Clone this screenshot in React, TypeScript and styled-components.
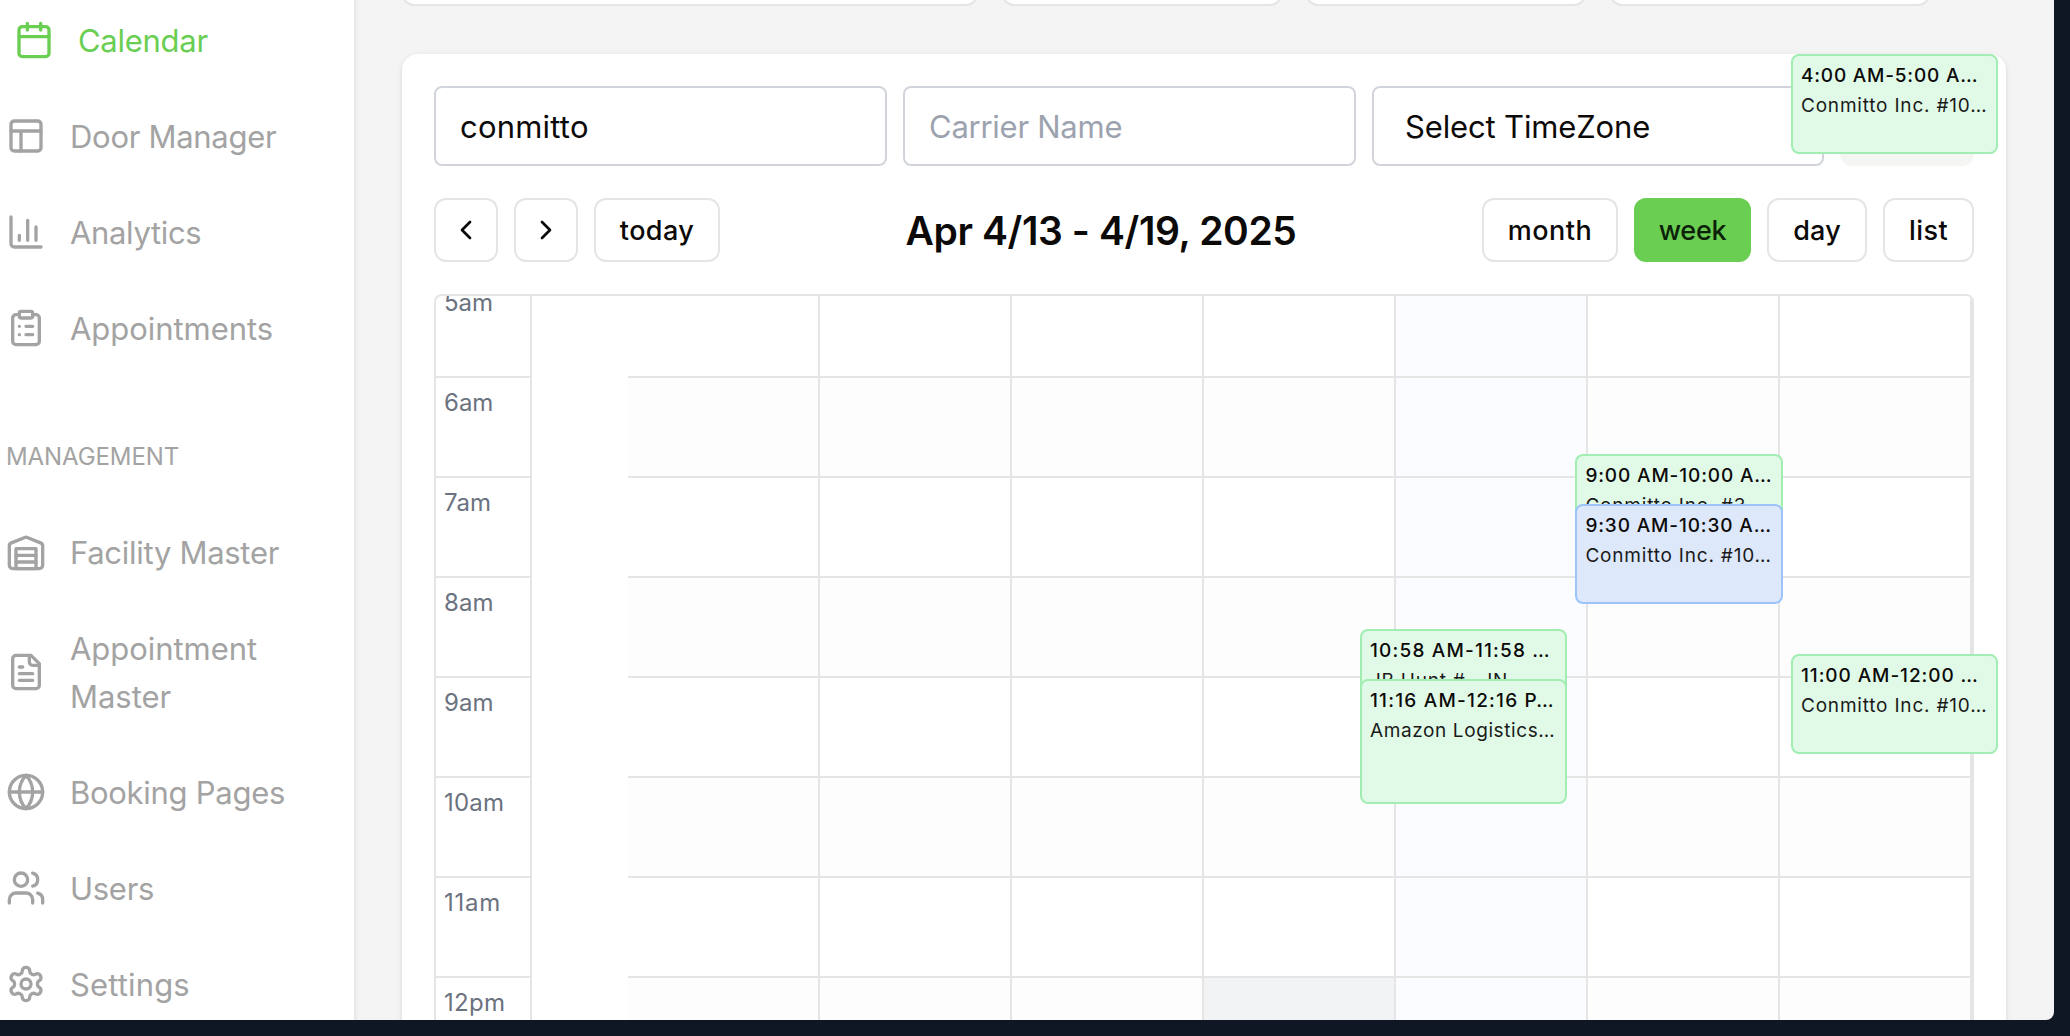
import React from 'react';
import styled, { createGlobalStyle, css } from 'styled-components';

const color = {
  frame: '#0f1624',
  page: '#f4f4f4',
  surface: '#ffffff',
  line: '#e5e5e5',
  field: '#d1d5db',
  text: '#0c0a09',
  nav: '#a3a3a3',
  green: '#69ce52',
  slate: '#6b7280',
};

const GlobalStyle = createGlobalStyle`
  *, *::before, *::after { box-sizing: border-box; }
  body {
    margin: 0;
    background: ${color.frame};
    color: ${color.text};
    font-family: Inter, "Liberation Sans", sans-serif;
    overflow: hidden;
  }
  button, input { font: inherit; color: inherit; }
`;

/* ---------- shell ---------- */

const Frame = styled.div`
  width: 2070px;
  height: 1036px;
  padding: 0 16px 16px 0;
  background: ${color.frame};
`;

const Window = styled.div`
  display: flex;
  width: 2054px;
  height: 1020px;
  overflow: hidden;
  background: ${color.page};
  border-bottom-right-radius: 8px;
`;

const softShadow = css`
  box-shadow: 0 2px 6px rgba(0, 0, 0, 0.1), 0 2px 4px -2px rgba(0, 0, 0, 0.1);
`;

/* ---------- sidebar ---------- */

const Sidebar = styled.nav`
  flex: 0 0 354px;
  margin-top: -8px;
  padding-left: 6px;
  background: ${color.surface};
  ${softShadow}
`;

const NavItem = styled.a<{ $active?: boolean }>`
  display: flex;
  align-items: center;
  gap: 24px;
  padding: 24px 40px 24px ${p => (p.$active ? 8 : 0)}px;
  color: ${p => (p.$active ? color.green : color.nav)};
`;

const NavIcon = styled.svg`
  flex: none;
  width: 40px;
  height: 40px;
  fill: none;
  stroke: currentColor;
  stroke-width: 2;
  stroke-linecap: round;
  stroke-linejoin: round;
`;

const NavLabel = styled.span<{ $track: number }>`
  margin: 1px 0 -1px;
  font-size: 31px;
  line-height: 48px;
  letter-spacing: ${p => p.$track}px;
`;

const NavHeading = styled.div`
  height: 128px;
  line-height: 32px;
  padding: 65px 0 31px;
  font-size: 24px;
  letter-spacing: -0.09px;
  color: ${color.nav};
`;

/* ---------- content ---------- */

const Content = styled.main`
  flex: 1;
  min-width: 0;
  padding: 0 48px;
`;

const SummaryRow = styled.div`
  display: flex;
  gap: 24px;
  height: 54px;
`;

const SummaryCard = styled.div<{ $width: number }>`
  width: ${p => p.$width}px;
  height: 46px;
  margin-top: -40px;
  background: ${color.surface};
  border: 2px solid ${color.line};
  border-radius: 12px;
`;

const Card = styled.section`
  position: relative;
  width: 1604px;
  height: 1200px;
  padding: 32px;
  background: ${color.surface};
  border-radius: 16px;
  ${softShadow}
`;

const Filters = styled.div`
  display: grid;
  grid-template-columns: 453px 453px 452px 134px;
  gap: 16px;
  height: 80px;
`;

const fieldBox = css`
  min-width: 0;
  width: 100%;
  height: 80px;
  border: 2px solid ${color.field};
  border-radius: 8px;
  background: ${color.surface};
  font-size: 31px;
`;

const Field = styled.input<{ $track: number }>`
  ${fieldBox}
  padding: 0 24px;
  outline: none;
  letter-spacing: ${p => p.$track}px;
  &::placeholder { color: #9ca3af; opacity: 1; }
`;

const ZoneSelect = styled.div`
  ${fieldBox}
  display: flex;
  align-items: center;
  padding: 0 31px;
  letter-spacing: -0.15px;
`;

const ClearButton = styled.button`
  border: 0;
  border-radius: 12px;
  background: #f5f5f4;
`;

const Toolbar = styled.div`
  display: flex;
  align-items: center;
  justify-content: space-between;
  height: 64px;
  margin: 32px 0;
`;

const ButtonGroup = styled.div`
  display: flex;
  gap: 16px;
`;

const ToolButton = styled.button<{ $width: number; $active?: boolean; $track?: number }>`
  display: flex;
  align-items: center;
  justify-content: center;
  width: ${p => p.$width}px;
  height: 64px;
  padding: 0;
  border: 2px solid ${p => (p.$active ? color.green : color.line)};
  border-radius: 12px;
  background: ${p => (p.$active ? color.green : color.surface)};
  color: ${p => (p.$active ? '#0c2108' : color.text)};
  font-size: 27px;
  font-weight: 500;
  letter-spacing: ${p => p.$track ?? 0}px;
`;

const Chevron = styled.svg`
  width: 32px;
  height: 32px;
  fill: none;
  stroke: currentColor;
  stroke-width: 2;
  stroke-linecap: round;
  stroke-linejoin: round;
`;

const Title = styled.h2`
  margin: 0;
  padding-top: 1px;
  font-size: 39px;
  font-weight: 600;
  line-height: 48px;
  letter-spacing: -0.4px;
  white-space: nowrap;
`;

/* ---------- time grid ---------- */

const GridFrame = styled.div`
  height: 1000px;
  overflow: hidden;
  border: 2px solid ${color.line};
  border-radius: 8px;
`;

const Hours = styled.div`
  margin-top: -18px;
`;

const HourRow = styled.div`
  display: grid;
  grid-template-columns: 96px 96px repeat(7, 192px);
  height: 100px;
`;

const HourLabel = styled.div<{ $track: number }>`
  grid-column: 1;
  padding: 9px 8px 0;
  border-right: 2px solid ${color.line};
  border-bottom: 2px solid ${color.line};
  font-size: 24px;
  line-height: 32px;
  letter-spacing: ${p => p.$track}px;
  color: ${color.slate};
`;

const cellTone = {
  plain: '#ffffff',
  striped: '#fdfdfd',
  today: '#fbfcff',
  marked: '#f2f3f5',
};

const Cell = styled.div<{ $tone: keyof typeof cellTone }>`
  background: ${p => cellTone[p.$tone]};
  border-right: 2px solid ${color.line};
  border-bottom: 2px solid ${color.line};
  &:nth-child(2) { grid-column: 3; }
`;

const Appointment = styled.article<{ $x: number; $y: number; $h: number; $blue?: boolean }>`
  position: absolute;
  left: ${p => p.$x}px;
  top: ${p => p.$y}px;
  width: 207.3px;
  height: ${p => p.$h}px;
  padding: 5px 0 0 8px;
  overflow: hidden;
  border: 2px solid ${p => (p.$blue ? '#9cc3fa' : '#a1edb2')};
  border-radius: 8px;
  background: ${p => (p.$blue ? '#dde8fb' : '#e1fae8')};
  font-size: 19px;
  line-height: 30px;
  white-space: nowrap;
`;

const AppointmentTime = styled.div<{ $track: number }>`
  font-weight: 500;
  letter-spacing: ${p => p.$track}px;
`;

const AppointmentName = styled.div<{ $track: number }>`
  letter-spacing: ${p => p.$track}px;
  color: #1a1a19;
`;

/* ---------- icons ---------- */

const icons: Record<string, React.ReactNode> = {
  calendar: (
    <>
      <path d="M8 2v4M16 2v4M3 10h18" />
      <rect x="3" y="4" width="18" height="18" rx="2" />
    </>
  ),
  layout: (
    <>
      <rect x="3" y="3" width="18" height="18" rx="2" />
      <path d="M3 9h18M9 21V9" />
    </>
  ),
  chart: <path d="M3 3v16a2 2 0 0 0 2 2h16M18 17V9M13 17V5M8 17v-3" />,
  clipboard: (
    <>
      <rect x="8" y="2" width="8" height="4" rx="1" />
      <path d="M16 4h2a2 2 0 0 1 2 2v14a2 2 0 0 1-2 2H6a2 2 0 0 1-2-2V6a2 2 0 0 1 2-2h2" />
      <path d="M12 11h4M12 16h4M8 11h.01M8 16h.01" />
    </>
  ),
  warehouse: (
    <>
      <path d="M22 8.35V20a2 2 0 0 1-2 2H4a2 2 0 0 1-2-2V8.35A2 2 0 0 1 3.26 6.5l8-3.2a2 2 0 0 1 1.48 0l8 3.2A2 2 0 0 1 22 8.35Z" />
      <path d="M6 18h12M6 14h12" />
      <rect x="6" y="10" width="12" height="12" />
    </>
  ),
  file: (
    <>
      <path d="M15 2H6a2 2 0 0 0-2 2v16a2 2 0 0 0 2 2h12a2 2 0 0 0 2-2V7Z" />
      <path d="M14 2v4a2 2 0 0 0 2 2h4M10 9H8M16 13H8M16 17H8" />
    </>
  ),
  globe: (
    <>
      <circle cx="12" cy="12" r="10" />
      <path d="M12 2a14.5 14.5 0 0 0 0 20 14.5 14.5 0 0 0 0-20M2 12h20" />
    </>
  ),
  users: (
    <>
      <path d="M16 21v-2a4 4 0 0 0-4-4H6a4 4 0 0 0-4 4v2" />
      <circle cx="9" cy="7" r="4" />
      <path d="M22 21v-2a4 4 0 0 0-3-3.87M16 3.13a4 4 0 0 1 0 7.75" />
    </>
  ),
  settings: (
    <>
      <path d="M12.22 2h-.44a2 2 0 0 0-2 2v.18a2 2 0 0 1-1 1.73l-.43.25a2 2 0 0 1-2 0l-.15-.08a2 2 0 0 0-2.73.73l-.22.38a2 2 0 0 0 .73 2.73l.15.1a2 2 0 0 1 1 1.72v.51a2 2 0 0 1-1 1.74l-.15.09a2 2 0 0 0-.73 2.73l.22.38a2 2 0 0 0 2.73.73l.15-.08a2 2 0 0 1 2 0l.43.25a2 2 0 0 1 1 1.73V20a2 2 0 0 0 2 2h.44a2 2 0 0 0 2-2v-.18a2 2 0 0 1 1-1.73l.43-.25a2 2 0 0 1 2 0l.15.08a2 2 0 0 0 2.73-.73l.22-.39a2 2 0 0 0-.73-2.73l-.15-.08a2 2 0 0 1-1-1.74v-.5a2 2 0 0 1 1-1.74l.15-.09a2 2 0 0 0 .73-2.73l-.22-.38a2 2 0 0 0-2.73-.73l-.15.08a2 2 0 0 1-2 0l-.43-.25a2 2 0 0 1-1-1.73V4a2 2 0 0 0-2-2z" />
      <circle cx="12" cy="12" r="3" />
    </>
  ),
};

/* ---------- data ---------- */

type NavEntry = { label: string; icon: string; track: number; active?: boolean };

const primaryNav: NavEntry[] = [
  { label: 'Calendar', icon: 'calendar', track: -0.28, active: true },
  { label: 'Door Manager', icon: 'layout', track: -0.29 },
  { label: 'Analytics', icon: 'chart', track: -0.33 },
  { label: 'Appointments', icon: 'clipboard', track: -0.04 },
];

const managementNav: NavEntry[] = [
  { label: 'Facility Master', icon: 'warehouse', track: -0.29 },
  { label: 'Appointment Master', icon: 'file', track: -0.04 },
  { label: 'Booking Pages', icon: 'globe', track: -0.28 },
  { label: 'Users', icon: 'users', track: -0.29 },
  { label: 'Settings', icon: 'settings', track: 0.15 },
];

const hours = [
  { label: '5am', track: 0 },
  { label: '6am', track: 0 },
  { label: '7am', track: 0 },
  { label: '8am', track: 0.1 },
  { label: '9am', track: 0.1 },
  { label: '10am', track: 0.2 },
  { label: '11am', track: 0.75 },
  { label: '12pm', track: 0.3 },
  { label: '1pm', track: 0 },
];
const days = [0, 1, 2, 3, 4, 5, 6];
const todayIndex = 4;

const toneOf = (row: number, day: number): keyof typeof cellTone => {
  if (day === todayIndex) return 'today';
  if (day === 3 && row === 7) return 'marked';
  return row % 2 ? 'striped' : 'plain';
};

const appointments = [
  { x: 1389, y: 0, h: 100, time: '4:00 AM-5:00 A…', tt: 0.8, name: 'Conmitto Inc. #10…', nt: 0.8 },
  { x: 1173.4, y: 400, h: 100, time: '9:00 AM-10:00 A…', tt: 0.87, name: 'Conmitto Inc. #3', nt: 0.8 },
  { x: 1173.4, y: 450, h: 100, time: '9:30 AM-10:30 A…', tt: 0.87, name: 'Conmitto Inc. #10…', nt: 0.8, blue: true },
  { x: 958, y: 575, h: 100, time: '10:58 AM-11:58 …', tt: 1.18, name: 'JB Hunt # - IN', nt: 0.75 },
  { x: 958, y: 625, h: 125, time: '11:16 AM-12:16 P…', tt: 1.22, name: 'Amazon Logistics…', nt: 0.6 },
  { x: 1389, y: 600, h: 100, time: '11:00 AM-12:00 …', tt: 0.93, name: 'Conmitto Inc. #10…', nt: 0.8 },
];

const NavList = ({ items }: { items: NavEntry[] }) => (
  <>
    {items.map(item => (
      <NavItem key={item.label} $active={item.active}>
        <NavIcon viewBox="0 0 24 24">{icons[item.icon]}</NavIcon>
        <NavLabel $track={item.track}>{item.label}</NavLabel>
      </NavItem>
    ))}
  </>
);

export default function App() {
  return (
    <Frame>
      <GlobalStyle />
      <Window>
        <Sidebar>
          <NavList items={primaryNav} />
          <NavHeading>MANAGEMENT</NavHeading>
          <NavList items={managementNav} />
        </Sidebar>

        <Content>
          <SummaryRow>
            <SummaryCard $width={576} />
            <SummaryCard $width={280} />
            <SummaryCard $width={280} />
            <SummaryCard $width={320} />
          </SummaryRow>

          <Card>
            <Filters>
              <Field $track={0.2} defaultValue="conmitto" />
              <Field $track={-0.26} placeholder="Carrier Name" />
              <ZoneSelect>Select TimeZone</ZoneSelect>
              <ClearButton />
            </Filters>

            <Toolbar>
              <ButtonGroup>
                <ToolButton $width={64}>
                  <Chevron viewBox="0 0 24 24"><path d="m15 18-6-6 6-6" /></Chevron>
                </ToolButton>
                <ToolButton $width={64}>
                  <Chevron viewBox="0 0 24 24"><path d="m9 18 6-6-6-6" /></Chevron>
                </ToolButton>
                <ToolButton $width={126} $track={0.4}>today</ToolButton>
              </ButtonGroup>
              <Title>Apr 4/13 - 4/19, 2025</Title>
              <ButtonGroup>
                <ToolButton $width={136} $track={0.5}>month</ToolButton>
                <ToolButton $width={117} $active $track={-0.3}>week</ToolButton>
                <ToolButton $width={100} $track={0.2}>day</ToolButton>
                <ToolButton $width={91} $track={0.4}>list</ToolButton>
              </ButtonGroup>
            </Toolbar>

            <GridFrame>
              <Hours>
                {hours.map((hour, row) => (
                  <HourRow key={hour.label}>
                    <HourLabel $track={hour.track}>{hour.label}</HourLabel>
                    {days.map(day => (
                      <Cell key={day} $tone={toneOf(row, day)} />
                    ))}
                  </HourRow>
                ))}
              </Hours>
            </GridFrame>

            {appointments.map(a => (
              <Appointment key={a.time} $x={a.x} $y={a.y} $h={a.h} $blue={a.blue}>
                <AppointmentTime $track={a.tt}>{a.time}</AppointmentTime>
                <AppointmentName $track={a.nt}>{a.name}</AppointmentName>
              </Appointment>
            ))}
          </Card>
        </Content>
      </Window>
    </Frame>
  );
}
